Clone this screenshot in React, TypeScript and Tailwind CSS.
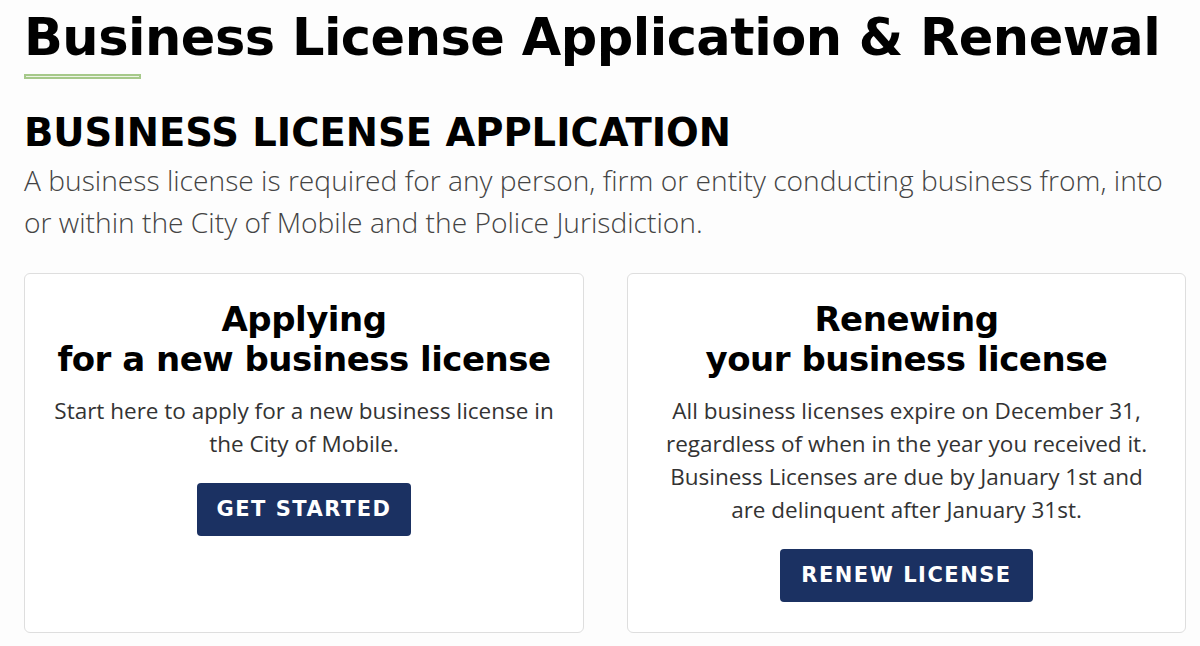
import React from 'react';

interface CardProps {
  title: string;
  subtitle: string;
  lines: string[];
  button: string;
  buttonWidth: string;
}

const Card: React.FC<CardProps> = ({ title, subtitle, lines, button, buttonWidth }) => {
  return (
    <div className="flex flex-col items-center border border-[#dedede] rounded-[6px] bg-white pt-[25px] h-[360px]">
      <h3 className="font-['DejaVu_Sans','Liberation_Sans',sans-serif] text-[34px] leading-[40px] font-bold text-black text-center tracking-[-0.5px]">
        {title}
        <br />
        {subtitle}
      </h3>
      <div className="mt-[15px] font-['Open_Sans','Liberation_Sans',sans-serif] text-[22.5px] leading-[33px] text-[#333] text-center">
        {lines.map((l, i) => (
          <div key={i}>{l}</div>
        ))}
      </div>
      <button
        className={`mt-[23px] h-[53px] ${buttonWidth} bg-[#1b3162] text-white rounded-[4px] font-['DejaVu_Sans','Liberation_Sans',sans-serif] text-[21px] font-bold tracking-[1.5px]`}
      >
        {button}
      </button>
    </div>
  );
};

export default function App() {
  return (
    <div className="min-h-[646px] bg-[#fdfdfd] px-[24px] pt-[8px]">
      <h1 className="font-['DejaVu_Sans','Liberation_Sans',sans-serif] text-[51px] leading-[60px] font-bold text-black tracking-[-0.5px]">
        Business License Application &amp; Renewal
      </h1>
      <div className="mt-[6px] w-[117px] h-[5px] border-2 border-[#a6c98a] bg-[#eef5e6]" />
      <h2 className="mt-[32px] font-['DejaVu_Sans','Liberation_Sans',sans-serif] text-[38.5px] leading-[44px] font-bold text-black">
        BUSINESS LICENSE APPLICATION
      </h2>
      <p className="mt-[4px] font-['Open_Sans','Liberation_Sans',sans-serif] text-[28.2px] leading-[42px] text-[#444] font-light">
        A business license is required for any person, firm or entity conducting business from, into
        <br />
        or within the City of Mobile and the Police Jurisdiction.
      </p>
      <div className="mt-[30px] grid grid-cols-[560px_559px] gap-[43px]">
        <Card
          title="Applying"
          subtitle="for a new business license"
          lines={['Start here to apply for a new business license in', 'the City of Mobile.']}
          button="GET STARTED"
          buttonWidth="w-[214px]"
        />
        <Card
          title="Renewing"
          subtitle="your business license"
          lines={[
            'All business licenses expire on December 31,',
            'regardless of when in the year you received it.',
            'Business Licenses are due by January 1st and',
            'are delinquent after January 31st.',
          ]}
          button="RENEW LICENSE"
          buttonWidth="w-[253px]"
        />
      </div>
    </div>
  );
}
